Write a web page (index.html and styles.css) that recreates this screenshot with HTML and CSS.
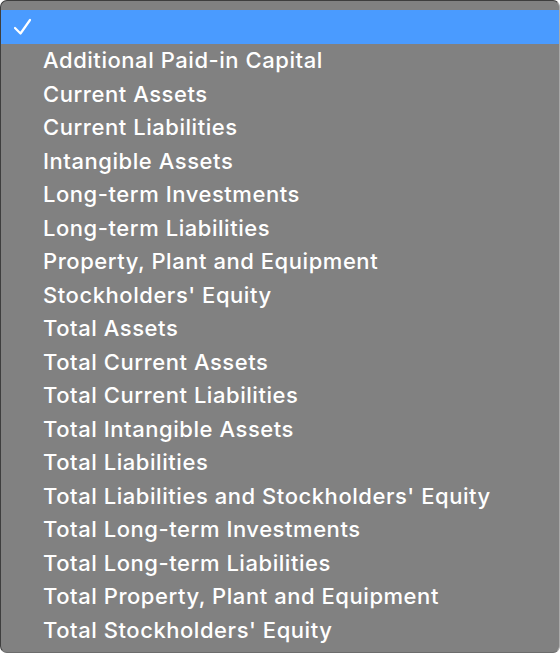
FILE: index.html
```html
<!DOCTYPE html>
<html lang="en">
<head>
    <meta charset="UTF-8">
    <title>Account Picker</title>
    <link rel="stylesheet" href="styles.css">
</head>
<body>
    <!-- Popup list of balance sheet accounts -->
    <ul class="menu">
        <li class="item selected">
            <svg class="check" width="20" height="18" viewBox="0 0 20 18">
                <path d="M2 10 L7.5 15.5 L17 2" fill="none" stroke="#fff" stroke-width="2.2" stroke-linecap="round" stroke-linejoin="round"/>
            </svg>
        </li>
        <li class="item">Additional Paid-in Capital</li>
        <li class="item">Current Assets</li>
        <li class="item">Current Liabilities</li>
        <li class="item">Intangible Assets</li>
        <li class="item">Long-term Investments</li>
        <li class="item">Long-term Liabilities</li>
        <li class="item">Property, Plant and Equipment</li>
        <li class="item">Stockholders' Equity</li>
        <li class="item">Total Assets</li>
        <li class="item">Total Current Assets</li>
        <li class="item">Total Current Liabilities</li>
        <li class="item">Total Intangible Assets</li>
        <li class="item">Total Liabilities</li>
        <li class="item">Total Liabilities and Stockholders' Equity</li>
        <li class="item">Total Long-term Investments</li>
        <li class="item">Total Long-term Liabilities</li>
        <li class="item">Total Property, Plant and Equipment</li>
        <li class="item">Total Stockholders' Equity</li>
    </ul>
</body>
</html>
```

FILE: styles.css
```css
body {
    margin: 0;
    background: #ffffff;
    font-family: Inter, "Liberation Sans", Arial, sans-serif;
}

.menu {
    list-style: none;
    margin: 0;
    padding: 9px 0 4px 0;
    width: 560px;
    height: 653px;
    box-sizing: border-box;
    background: #818181;
    border: 1px solid #3e3e3e;
    border-right-color: #a9a9a9;
    border-bottom-color: #6c6c6c;
    border-radius: 7px;
    overflow: hidden;
}

.item {
    height: 33.5px;
    display: flex;
    align-items: center;
    padding-left: 42px;
    color: #ffffff;
    font-size: 22px;
    font-weight: 500;
    letter-spacing: 0.55px;
    white-space: nowrap;
}

.selected {
    position: relative;
    background: #4a9bff;
}

.check {
    position: absolute;
    left: 12px;
    top: 8px;
}
```
